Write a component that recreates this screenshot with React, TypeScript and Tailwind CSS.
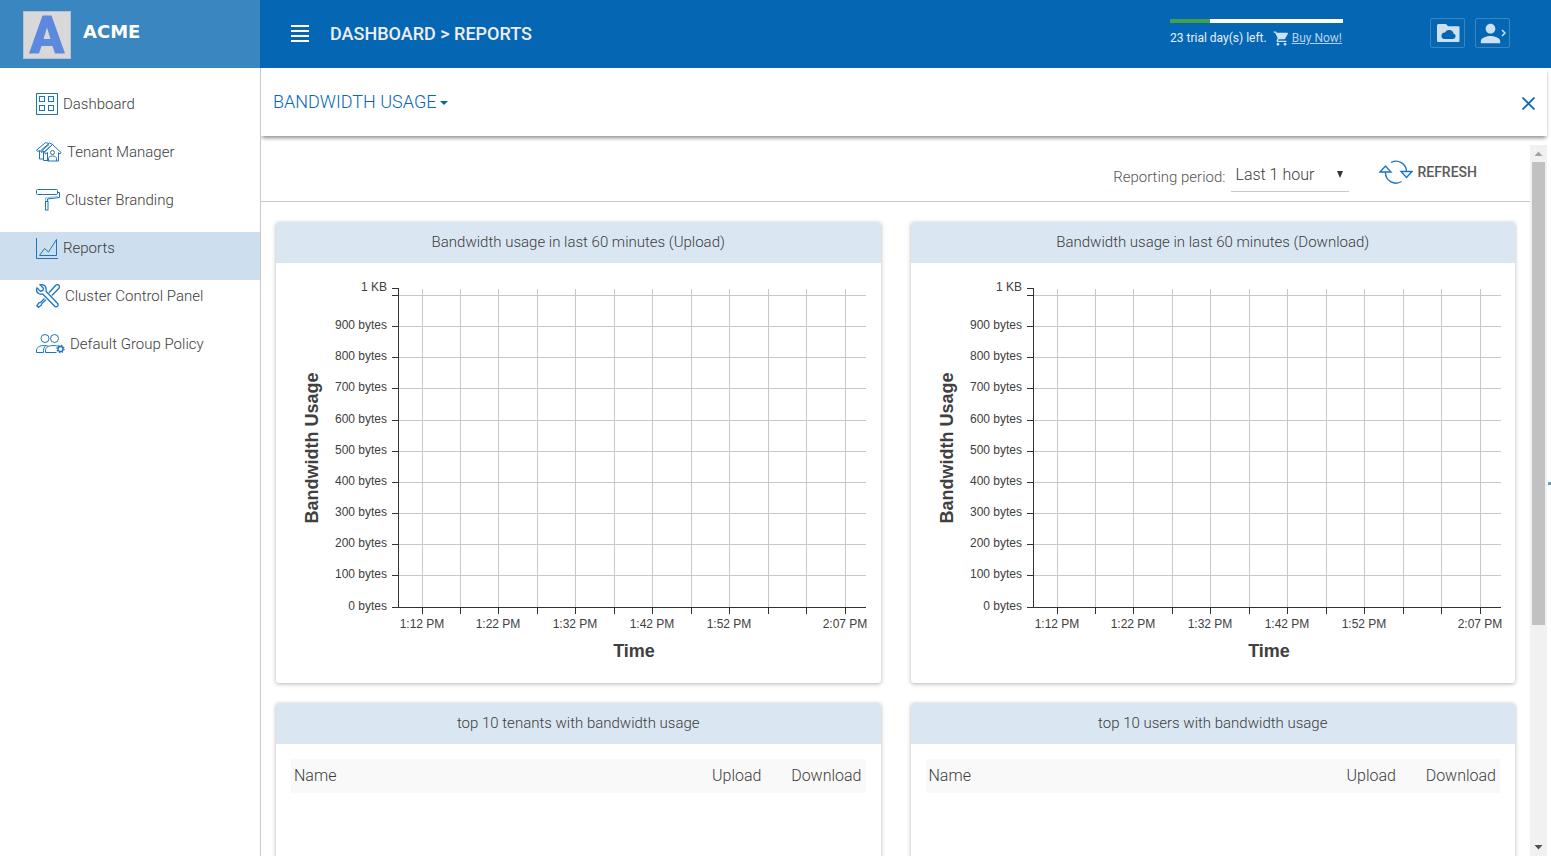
import { useState } from "react";
import type { ReactNode } from "react";
import { MdPerson, MdShoppingCart } from "react-icons/md";

const iconProps = {
	fill: "none",
	stroke: "#1f75bb",
	strokeWidth: 1,
	"aria-hidden": true,
} as const;

const DashboardIcon = () => (
	<svg width="22" height="22" viewBox="0 0 22 22" {...iconProps}>
		<rect x="0.5" y="0.5" width="21" height="21" />
		<rect x="3.5" y="3.5" width="5" height="5" />
		<rect x="12.5" y="3.5" width="5" height="5" />
		<rect x="3.5" y="12.5" width="5" height="5" />
		<rect x="12.5" y="12.5" width="5" height="5" />
	</svg>
);

const TenantIcon = () => (
	<svg width="26" height="20" viewBox="0 0 26 20" {...iconProps}>
		<path d="M8.5 10 16.5 2.5 25 10.5 24 12 22.5 10.7V19H11.5V10.5L9.5 12Z" />
		<path d="M16.5 2.5 13.5 1 4.5 8.8 5.5 10.5 7.5 9V18.5H11.5" />
		<path d="M13 1.5 9.5.6.6 8 1.6 9.5 3.5 8.5V17H7.5M5 9.5l8-7M7.5 10.5l8-7" />
		<circle cx="16.5" cy="10.5" r="2" />
		<path d="M12.5 19v-2.5c0-1.5 1.5-2.5 4-2.5s4 1 4 2.5V19" />
	</svg>
);

const BrandingIcon = () => (
	<svg width="24" height="22" viewBox="0 0 24 22" {...iconProps}>
		<rect x="0.5" y="0.5" width="21" height="5" rx="1" />
		<path d="M21.5 3.5h2v5l-12 1.5v2.500" />
		<path d="M21.5 7.500 9.500 9v3.500" opacity="0.5" />
		<rect x="9.5" y="12.5" width="2.500" height="8.500" />
	</svg>
);

const ReportsIcon = () => (
	<svg width="22" height="22" viewBox="0 0 22 22" {...iconProps}>
		<path d="M.5 1V21.500H22" />
		<path d="M3.500 18.500 8.500 11.500 12.500 15 20.500 2.500V18.500Z" />
	</svg>
);

const ToolsIcon = () => (
	<svg width="24" height="24" viewBox="0 0 24 24" {...iconProps} strokeWidth={1.3}>
		<path d="M4 .8 7.500 4.200 7 6.500 4.500 7.200 1 3.800C0 6.500 1 9 3.500 10c1.200.4 2.200.3 3.200 0L18.500 22c1 1.200 2.200 1 3 .3 1-1 .8-2.200-.1-3L10 7.200C10.500 5 10.200 3.200 8.700 1.800 7.500.8 5.500.3 4 .8Z" />
		<path d="M13 8.800 19.500 1.500c1-1 2.300-1.200 3.300-.2s.9 2.200-.1 3.200L15.800 11.500" />
		<path d="M8.500 14.500 4.500 18.500 3 18.800.8 21.800 2.500 23.300 5.300 21.200 5.800 19.500 10 15.800" />
	</svg>
);

const GroupIcon = () => (
	<svg width="29" height="20" viewBox="0 0 29 20" {...iconProps}>
		<circle cx="9" cy="4.500" r="4" />
		<circle cx="18.500" cy="4.500" r="4" />
		<path d="M7.500 18.500H.5V17c0-4 3-5.500 8-5.500 1.500 0 2.500.2 3.500.7" />
		<path d="M20.500 18.500H9.500V17c0-4 3-5.500 8.500-5.500 2 0 3.500.4 4.500 1M7.500 18.500c-.3-3 .5-5.500 2.500-7" />
		<circle cx="24.500" cy="15" r="2.500" strokeWidth="1.300" />
		<circle cx="24.500" cy="15" r="3.500" strokeDasharray="1.400 1.350" strokeWidth="1.400" />
	</svg>
);

const RefreshIcon = () => (
	<svg width="34" height="24" viewBox="0 0 34 24" {...iconProps} strokeWidth={1.4}>
		<path d="M12 2.500A10.500 10.500 0 0 1 27.500 11.500" />
		<path d="M22.500 21.500A10.500 10.500 0 0 1 6.500 12" />
		<path d="M22 11.500H33L27.500 17.500Z" />
		<path d="M1 12H12L6.500 6Z" />
	</svg>
);

const CloudFolderIcon = () => (
	<svg width="24" height="20" viewBox="0 0 24 20" aria-hidden="true">
		<path
			fill="#cde1f0"
			fillRule="evenodd"
			d="M2.500 1H10l2 2.300h10.500a1 1 0 0 1 1 1V18a1 1 0 0 1-1 1H2a1 1 0 0 1-1-1V2.500A1.500 1.500 0 0 1 2.500 1ZM8 16h9a2.800 2.800 0 0 0 .5-5.500A4.600 4.600 0 0 0 9 9.500 3.300 3.300 0 0 0 8 16Z"
		/>
	</svg>
);

const navItems: { label: string; icon: ReactNode }[] = [
	{ label: "Dashboard", icon: <DashboardIcon /> },
	{ label: "Tenant Manager", icon: <TenantIcon /> },
	{ label: "Cluster Branding", icon: <BrandingIcon /> },
	{ label: "Reports", icon: <ReportsIcon /> },
	{ label: "Cluster Control Panel", icon: <ToolsIcon /> },
	{ label: "Default Group Policy", icon: <GroupIcon /> },
];

const yTicks = [
	{ y: 17, label: "" },
	{ y: 48, label: "900 bytes" },
	{ y: 79, label: "800 bytes" },
	{ y: 110, label: "700 bytes" },
	{ y: 142, label: "600 bytes" },
	{ y: 173, label: "500 bytes" },
	{ y: 204, label: "400 bytes" },
	{ y: 235, label: "300 bytes" },
	{ y: 266, label: "200 bytes" },
	{ y: 297, label: "100 bytes" },
	{ y: 329, label: "0 bytes" },
];

const xTicks = [
	{ x: 131, label: "1:12 PM" },
	{ x: 169, label: "" },
	{ x: 207, label: "1:22 PM" },
	{ x: 246, label: "" },
	{ x: 284, label: "1:32 PM" },
	{ x: 323, label: "" },
	{ x: 361, label: "1:42 PM" },
	{ x: 400, label: "" },
	{ x: 438, label: "1:52 PM" },
	{ x: 477, label: "" },
	{ x: 515, label: "" },
	{ x: 554, label: "2:07 PM" },
];

const BandwidthChart = ({ title }: { title: string }) => (
	<svg
		role="img"
		aria-label={title}
		className="block h-[390px] w-full overflow-visible font-['Liberation_Sans',sans-serif] font-normal"
		fill="#404040"
	>
		<g stroke="#c8c8c8" shapeRendering="crispEdges">
			{yTicks.slice(0, -1).map(({ y }) => (
				<line key={y} x1="108" x2="575" y1={y + 0.5} y2={y + 0.5} />
			))}
			{xTicks.map(({ x }) => (
				<line key={x} x1={x + 0.5} x2={x + 0.5} y1="11" y2="329" />
			))}
		</g>
		<g stroke="#333333" fill="none" shapeRendering="crispEdges">
			<path d="M101 10.500H107.500V329.500" />
			<path d="M101 329.500H575" />
			{yTicks.map(({ y }) => (
				<line key={y} x1="101" x2="107" y1={y + 0.5} y2={y + 0.5} />
			))}
			{xTicks.map(({ x }) => (
				<line key={x} x1={x + 0.5} x2={x + 0.5} y1="330" y2="336" />
			))}
		</g>
		<g fontSize="12" textAnchor="end">
			<text x="96" y="13">1 KB</text>
			{yTicks.map(({ y, label }) => (
				<text key={y} x="96" y={y + 3}>{label}</text>
			))}
		</g>
		<g fontSize="12" textAnchor="middle">
			{xTicks.map(({ x, label }) => (
				<text key={x} x={x} y="350">{label}</text>
			))}
		</g>
		<g fontSize="18" fontWeight="bold" textAnchor="middle">
			<text x="343" y="379">Time</text>
			<text transform="translate(27 170) rotate(-90)">Bandwidth Usage</text>
		</g>
	</svg>
);

const UsageTable = () => (
	<table className="w-full text-[16px] leading-[34px]">
		<thead>
			<tr className="bg-[#f9f9f9]">
				<th className="pl-[3px] text-left font-light">Name</th>
				<th className="w-[100px] pr-1 text-right font-light">Upload</th>
				<th className="w-[100px] pr-1 text-right font-light">Download</th>
			</tr>
		</thead>
		<tbody />
	</table>
);

const Card = ({ title, children }: { title: string; children: ReactNode }) => (
	<section className="min-h-[461px] rounded-[3px] bg-white shadow-[0_1px_4px_rgba(0,0,0,0.3)]">
		<h2 className="rounded-t-[3px] bg-[#dae7f2] text-center text-[15px] leading-[41px]">
			{title}
		</h2>
		<div className="p-[15px]">{children}</div>
	</section>
);

const Scrollbar = () => (
	<div className="flex w-[17px] shrink-0 flex-col bg-[#f1f1f1]" aria-hidden="true">
		<svg width="17" height="17" viewBox="0 0 17 17" fill="#a3a3a3">
			<path d="M4.500 11h8L8.500 6.500Z" />
		</svg>
		<div className="min-h-0 flex-1 px-[2px]">
			<div className="h-[68.4%] bg-[#c1c1c1]" />
		</div>
		<svg width="17" height="17" viewBox="0 0 17 17" fill="#505050">
			<path d="M4.500 6h8L8.500 10.500Z" />
		</svg>
	</div>
);

const Header = () => (
	<header className="flex h-[68px] shrink-0 bg-[#0567b4] text-white">
		<div className="flex w-[260px] shrink-0 items-center gap-3 bg-[#3a86c1] pl-[23px]">
			<div className="mt-[2px] flex size-12 items-center justify-center border border-[#b9bfd0] bg-[#d8d8d8]">
				<svg width="38" height="40" viewBox="0 0 38 40" fill="#5c88dd" aria-hidden="true">
					<path
						fillRule="evenodd"
						d="M14.500.5h9L37 38.500H27l-2.500-7.500H13.500L11 38.500H1ZM19 12.500 15.500 24h7Z"
					/>
				</svg>
			</div>
			<span className="pb-1 font-['DejaVu_Sans',sans-serif] text-[18px] leading-6 font-bold">
				ACME
			</span>
		</div>
		<div className="flex min-w-0 flex-1 items-center pr-[41px] pb-[2px] pl-[31px]">
			<button type="button" aria-label="Toggle menu" className="flex w-[18px] flex-col gap-[3px]">
				<span className="h-[2px] w-full bg-white" />
				<span className="h-[2px] w-full bg-white" />
				<span className="h-[2px] w-full bg-white" />
				<span className="h-[2px] w-full bg-white" />
			</button>
			<h1 className="ml-[21px] text-[18px] font-medium text-[#eeeeee]">
				DASHBOARD &gt; REPORTS
			</h1>
			<div className="mr-[87px] ml-auto w-[173px] text-[12px] font-normal">
				<div className="h-1 bg-white">
					<div className="h-full w-[23%] bg-[#43a047]" />
				</div>
				<div className="mt-[6px] flex items-center gap-[6px] whitespace-nowrap text-[#e6f0f8]">
					<span>23 trial day(s) left.</span>
					<a href="#buy" className="flex items-center gap-[2px] text-[#b4d1e9]">
						<MdShoppingCart size={17} className="text-[#cde1f0]" aria-hidden="true" />
						<span className="underline">Buy Now!</span>
					</a>
				</div>
			</div>
			<div className="flex gap-[10px]">
				<button
					type="button"
					aria-label="Cloud folder"
					className="flex h-[30px] w-[35px] items-center justify-center rounded-[2px] border border-[#3a86c1]"
				>
					<CloudFolderIcon />
				</button>
				<button
					type="button"
					aria-label="Account"
					className="flex h-[30px] w-[35px] items-center justify-center rounded-[2px] border border-[#3a86c1] pr-1 text-[#cde1f0]"
				>
					<MdPerson size={29} className="-mr-1 shrink-0" aria-hidden="true" />
					<svg width="5" height="8" viewBox="0 0 5 8" fill="none" stroke="currentColor" strokeWidth="1.500" className="shrink-0" aria-hidden="true">
						<path d="M1 1l3 3-3 3" />
					</svg>
				</button>
			</div>
		</div>
	</header>
);

const Sidebar = () => (
	<nav className="w-[261px] shrink-0 border-r border-[#c8c8c8] pt-5">
		{navItems.map((item) => (
			<a
				key={item.label}
				href="#"
				className={`flex h-12 items-center gap-[5px] pb-4 pl-9 text-[15px] ${
					item.label === "Reports" ? "bg-[#cddfee]" : ""
				}`}
			>
				{item.icon}
				{item.label}
			</a>
		))}
	</nav>
);

const App = () => {
	const [period, setPeriod] = useState("Last 1 hour");

	return (
		<div className="flex h-screen flex-col overflow-hidden bg-white font-['Roboto',sans-serif] font-light text-[#3c3c3c]">
			<Header />
			<div className="flex min-h-0 flex-1">
				<Sidebar />
				<main className="flex min-w-0 flex-1 flex-col overflow-hidden">
					<div className="mr-1 flex h-[68px] shrink-0 items-center justify-between pr-3 pl-3 text-[#0567b4] shadow-[0_3px_4px_-1px_rgba(0,0,0,0.45)]">
						<button type="button" className="flex items-center gap-1 pb-[2px] text-[18px]">
							BANDWIDTH USAGE
							<svg width="8" height="4" viewBox="0 0 8 4" fill="currentColor" className="mt-[3px]" aria-hidden="true">
								<path d="M0 0h8L4 4Z" />
							</svg>
						</button>
						<button type="button" aria-label="Close" className="pt-[2px]">
							<svg width="13" height="13" viewBox="0 0 13 13" stroke="currentColor" strokeWidth="1.700" aria-hidden="true">
								<path d="M.5.5l12 12M12.500.5l-12 12" />
							</svg>
						</button>
					</div>
					<div className="mt-[9px] flex min-h-0 flex-1">
						<div className="min-w-0 flex-1 overflow-y-auto [scrollbar-width:none]">
							<div className="flex h-[57px] items-center justify-end border-b border-[#c8c8c8] pr-[53px] pb-[2px]">
								<label htmlFor="period" className="pt-[10px] text-[15px] text-[#555555]">
									Reporting period:
								</label>
								<div className="mt-[5px] ml-[6px] grid h-[34px] w-[118px] items-center border-b border-[#c8c8c8]">
									<select
										id="period"
										value={period}
										onChange={(e) => setPeriod(e.target.value)}
										className="col-start-1 row-start-1 w-full appearance-none bg-transparent pt-[2px] pl-1 text-[16px]"
									>
										<option>Last 1 hour</option>
										<option>Last 24 hours</option>
										<option>Last 7 days</option>
									</select>
									<svg
										width="6"
										height="7"
										viewBox="0 0 6 7"
										fill="#333333"
										className="pointer-events-none col-start-1 row-start-1 mr-[6px] justify-self-end"
										aria-hidden="true"
									>
										<path d="M0 0h6L3 7Z" />
									</svg>
								</div>
								<button
									type="button"
									className="ml-[30px] flex items-center gap-1 text-[14px] font-medium text-[#5a5a5a]"
								>
									<RefreshIcon />
									REFRESH
								</button>
							</div>
							<div className="grid grid-cols-2 gap-x-[30px] gap-y-5 px-[15px] py-5">
								<Card title="Bandwidth usage in last 60 minutes (Upload)">
									<BandwidthChart title="Upload bandwidth over time" />
								</Card>
								<Card title="Bandwidth usage in last 60 minutes (Download)">
									<BandwidthChart title="Download bandwidth over time" />
								</Card>
								<Card title="top 10 tenants with bandwidth usage">
									<UsageTable />
								</Card>
								<Card title="top 10 users with bandwidth usage">
									<UsageTable />
								</Card>
							</div>
						</div>
						<Scrollbar />
						<div className="flex w-1 shrink-0 items-center justify-center pb-[35px]" aria-hidden="true">
							<span className="h-[3px] w-[3px] bg-[#5aa0dc]" />
						</div>
					</div>
				</main>
			</div>
		</div>
	);
};

export default App;
